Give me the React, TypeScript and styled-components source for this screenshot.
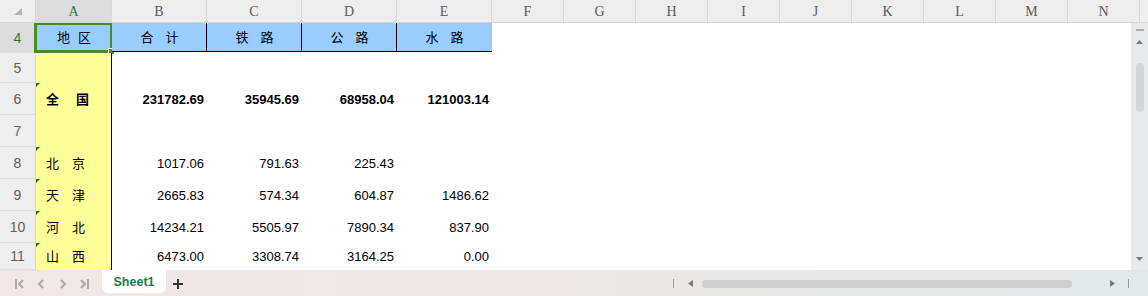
import React from "react";
import styled, { createGlobalStyle, css } from "styled-components";

const Global = createGlobalStyle`
  html, body { margin: 0; padding: 0; background: #fff; }
  body { width: 1148px; height: 296px; overflow: hidden; }
`;

const NUM_FONT = `"Liberation Sans", Arial, sans-serif`;
const CJK_FONT = `"Liberation Sans", "Noto Sans CJK SC", sans-serif`;

const Frame = styled.div`
  width: 1148px;
  height: 296px;
  display: flex;
  flex-direction: column;
  overflow: hidden;
  background: #fff;
`;

/* ---------- column headers ---------- */
const HeaderRow = styled.div`
  display: flex;
  flex: none;
  height: 23px;
  background: #eeeeee;
`;

const Corner = styled.div`
  width: 36px;
  flex: none;
  box-sizing: border-box;
  border-right: 1px solid #d6d6d6;
  border-bottom: 1px solid #d6d6d6;
  display: flex;
  align-items: flex-end;
  justify-content: flex-end;
  padding: 0 13px 7px 0;
`;

const ColHead = styled.div<{ $w: number; $active?: boolean }>`
  width: ${(p) => p.$w}px;
  flex: none;
  box-sizing: border-box;
  border-right: 1px solid #d9d9d9;
  border-bottom: 1px solid #d6d6d6;
  display: flex;
  align-items: center;
  justify-content: center;
  font-family: "Liberation Serif", "DejaVu Serif", serif;
  font-size: 14px;
  color: ${(p) => (p.$active ? "#1f7a45" : "#5a5a5a")};
  background: ${(p) => (p.$active ? "#dcdcdc" : "#eeeeee")};
  padding-top: 1px;
`;

const HeaderFill = styled.div`
  flex: 1;
  border-bottom: 1px solid #d6d6d6;
`;

/* ---------- body ---------- */
const Body = styled.div`
  flex: 1;
  display: flex;
  min-height: 0;
`;

const Sheet = styled.div`
  flex: 1;
  display: flex;
  flex-direction: column;
  overflow: hidden;
  background: #fff;
`;

const Row = styled.div<{ $h?: number }>`
  display: flex;
  flex: ${(p) => (p.$h ? `0 0 ${p.$h}px` : "1 1 auto")};
  height: ${(p) => (p.$h ? `${p.$h}px` : "auto")};
`;

const RowHead = styled.div<{ $active?: boolean }>`
  width: 36px;
  flex: none;
  box-sizing: border-box;
  border-right: 1px solid #d6d6d6;
  border-bottom: 1px solid #dcdcdc;
  background: ${(p) => (p.$active ? "#dcdcdc" : "#eeeeee")};
  color: ${(p) => (p.$active ? "#1f7a45" : "#606060")};
  font-family: ${NUM_FONT};
  font-size: 14px;
  display: flex;
  align-items: center;
  justify-content: center;
`;

type CellKind = "head" | "label" | "num" | "empty";

const Cell = styled.div<{
  $w: number;
  $kind: CellKind;
  $bold?: boolean;
  $edge?: boolean;
}>`
  position: relative;
  width: ${(p) => p.$w}px;
  flex: none;
  box-sizing: border-box;
  display: flex;
  align-items: center;
  font-size: 13px;
  color: #000;
  font-weight: ${(p) => (p.$bold ? 700 : 400)};
  ${(p) =>
    p.$kind === "head" &&
    css`
      background: #99ccff;
      background-clip: padding-box;
      border-bottom: 1px solid transparent;
      box-shadow: inset 0 -1px 0 #000 ${p.$edge ? ", inset -1px 0 0 #000" : ""};
      justify-content: center;
      font-family: ${CJK_FONT};
    `}
  ${(p) =>
    p.$kind === "label" &&
    css`
      background: #ffff99;
      border-right: 1px solid #000;
      padding-left: 10px;
      font-family: ${CJK_FONT};
    `}
  ${(p) =>
    p.$kind === "num" &&
    css`
      justify-content: flex-end;
      padding-right: 3px;
      font-family: ${NUM_FONT};
    `}
`;

const Chars = styled.span<{ $gap: number }>`
  display: inline-flex;
  gap: ${(p) => p.$gap}px;
  line-height: 1;
`;

const ErrorMark = styled.span`
  position: absolute;
  left: 0;
  top: 0;
  width: 0;
  height: 0;
  border-top: 4px solid #1a7a1a;
  border-right: 4px solid transparent;
`;

const Selection = styled.div`
  position: absolute;
  left: -2px;
  top: -1px;
  width: 79px;
  height: 31px;
  box-sizing: border-box;
  border: 3px solid #4a8c28;
  pointer-events: none;
`;

const FillHandle = styled.span`
  position: absolute;
  right: -5px;
  bottom: -5px;
  width: 5px;
  height: 5px;
  background: #4a8c28;
  border: 1px solid #fff;
`;

/* ---------- vertical scrollbar ---------- */
const VScroll = styled.div`
  width: 17px;
  flex: none;
  background: #e6eaea;
  display: flex;
  flex-direction: column;
  align-items: center;
  padding: 6px 0 9px;
  box-sizing: border-box;
`;

const Dash = styled.span`
  width: 8px;
  height: 2px;
  background: #a9adad;
  margin-left: 1px;
`;

const Thumb = styled.span<{ $vertical?: boolean }>`
  display: block;
  background: #d2d6d6;
  border-radius: 4px;
  ${(p) =>
    p.$vertical
      ? css`
          width: 8px;
          height: 49px;
          margin: 19px 0 0 1px;
        `
      : css`
          width: 370px;
          height: 8px;
          background: #cfcfcf;
        `}
`;

const Grow = styled.span`
  flex: 1;
`;

/* ---------- bottom bar ---------- */
const BottomBar = styled.div`
  flex: 0 0 26px;
  height: 26px;
  display: flex;
  align-items: stretch;
  background: linear-gradient(90deg, #f1e7e7 0%, #ebe8e6 50%, #e1e9e9 100%);
  border-top: 1px solid #e9e3e3;
  box-sizing: border-box;
`;

const NavGroup = styled.div`
  display: flex;
  align-items: center;
  padding-left: 15px;
  color: #a9a9a9;
`;

const NavBtn = styled.span<{ $gap: number }>`
  display: flex;
  margin-right: ${(p) => p.$gap}px;
`;

const Tab = styled.div`
  width: 64px;
  height: 23px;
  margin-top: -1px;
  background: #fff;
  border-radius: 0 0 6px 6px;
  display: flex;
  align-items: center;
  justify-content: center;
  font-family: ${NUM_FONT};
  font-weight: 700;
  font-size: 12.5px;
  color: #1b7a4c;
`;

const AddBtn = styled.span`
  display: flex;
  align-items: center;
  margin-left: 7px;
  color: #333;
`;

const HScroll = styled.div`
  margin-left: auto;
  padding-right: 19px;
  display: flex;
  align-items: center;
  color: #8c8c8c;
`;

const Tick = styled.span<{ $mr?: number }>`
  width: 1px;
  height: 9px;
  background: #9a9a9a;
  margin-right: ${(p) => p.$mr ?? 0}px;
`;

const Arrow = styled.span<{ $mr?: number }>`
  display: flex;
  margin-right: ${(p) => p.$mr ?? 0}px;
`;

/* ---------- data ---------- */
const colWidths: [string, number][] = [
  ["A", 76],
  ["B", 95],
  ["C", 95],
  ["D", 95],
  ["E", 95],
  ["F", 72],
  ["G", 72],
  ["H", 72],
  ["I", 72],
  ["J", 72],
  ["K", 72],
  ["L", 72],
  ["M", 72],
  ["N", 72],
];

const headers: { t: string; gap: number }[] = [
  { t: "地区", gap: 8 },
  { t: "合计", gap: 12 },
  { t: "铁路", gap: 12 },
  { t: "公路", gap: 12 },
  { t: "水路", gap: 12 },
];

type DataRow = {
  n: number;
  h?: number;
  label?: string;
  bold?: boolean;
  vals?: string[];
};

const rows: DataRow[] = [
  { n: 5, h: 30 },
  {
    n: 6,
    h: 32,
    label: "全国",
    bold: true,
    vals: ["231782.69", "35945.69", "68958.04", "121003.14"],
  },
  { n: 7, h: 32 },
  { n: 8, h: 32, label: "北京", vals: ["1017.06", "791.63", "225.43", ""] },
  { n: 9, h: 32, label: "天津", vals: ["2665.83", "574.34", "604.87", "1486.62"] },
  { n: 10, h: 32, label: "河北", vals: ["14234.21", "5505.97", "7890.34", "837.90"] },
  { n: 11, label: "山西", vals: ["6473.00", "3308.74", "3164.25", "0.00"] },
];

const Spaced = ({ text, gap }: { text: string; gap: number }) => (
  <Chars $gap={gap}>
    {text.split("").map((c, i) => (
      <span key={i}>{c}</span>
    ))}
  </Chars>
);

const Tri = ({ dir }: { dir: "up" | "down" | "left" | "right" }) => {
  const pts = {
    up: "0,4 7,4 3.5,0",
    down: "0,0 7,0 3.5,4",
    left: "5,0 5,7 0,3.5",
    right: "0,0 0,7 5,3.5",
  }[dir];
  const vertical = dir === "up" || dir === "down";
  return (
    <svg width={vertical ? 7 : 5} height={vertical ? 4 : 7} viewBox={vertical ? "0 0 7 4" : "0 0 5 7"}>
      <polygon points={pts} fill="#7a7a7a" />
    </svg>
  );
};

export default function App() {
  return (
    <Frame>
      <Global />
      <HeaderRow>
        <Corner>
          <svg width="8" height="7" viewBox="0 0 8 7">
            <polygon points="8,0 8,7 0,7" fill="#b4b4b4" />
          </svg>
        </Corner>
        {colWidths.map(([k, w]) => (
          <ColHead key={k} $w={w} $active={k === "A"}>
            {k}
          </ColHead>
        ))}
        <HeaderFill />
      </HeaderRow>

      <Body>
        <Sheet>
          <Row $h={30}>
            <RowHead $active>4</RowHead>
            {headers.map((h, i) => (
              <Cell key={h.t} $w={colWidths[i][1]} $kind="head" $edge={i >= 1 && i <= 3}>
                <Spaced text={h.t} gap={h.gap} />
                {i === 0 && (
                  <Selection>
                    <FillHandle />
                  </Selection>
                )}
              </Cell>
            ))}
          </Row>
          {rows.map((r) => (
            <Row key={r.n} $h={r.h}>
              <RowHead>{r.n}</RowHead>
              <Cell $w={76} $kind="label" $bold={r.bold}>
                {r.label && <ErrorMark />}
                {r.label && <Spaced text={r.label} gap={r.bold ? 17 : 13} />}
              </Cell>
              {[1, 2, 3, 4].map((ci) => (
                <Cell key={ci} $w={95} $kind="num" $bold={r.bold}>
                  {r.vals ? r.vals[ci - 1] : ""}
                </Cell>
              ))}
            </Row>
          ))}
        </Sheet>
        <VScroll>
          <Dash />
          <Arrow style={{ marginTop: 9 }}>
            <Tri dir="up" />
          </Arrow>
          <Thumb $vertical />
          <Grow />
          <Arrow>
            <Tri dir="down" />
          </Arrow>
        </VScroll>
      </Body>

      <BottomBar>
        <NavGroup>
          <NavBtn $gap={14}>
            <svg width="9" height="10" viewBox="0 0 9 10" fill="none" stroke="#a9a9a9" strokeWidth="2">
              <line x1="1" y1="0" x2="1" y2="10" />
              <polyline points="8,1 4,5 8,9" />
            </svg>
          </NavBtn>
          <NavBtn $gap={16}>
            <svg width="6" height="10" viewBox="0 0 6 10" fill="none" stroke="#a9a9a9" strokeWidth="2">
              <polyline points="5,1 1,5 5,9" />
            </svg>
          </NavBtn>
          <NavBtn $gap={14}>
            <svg width="6" height="10" viewBox="0 0 6 10" fill="none" stroke="#a9a9a9" strokeWidth="2">
              <polyline points="1,1 5,5 1,9" />
            </svg>
          </NavBtn>
          <NavBtn $gap={13}>
            <svg width="9" height="10" viewBox="0 0 9 10" fill="none" stroke="#a9a9a9" strokeWidth="2">
              <polyline points="1,1 5,5 1,9" />
              <line x1="8" y1="0" x2="8" y2="10" />
            </svg>
          </NavBtn>
        </NavGroup>
        <Tab>Sheet1</Tab>
        <AddBtn>
          <svg width="10" height="10" viewBox="0 0 10 10" stroke="#333" strokeWidth="2">
            <line x1="0" y1="5" x2="10" y2="5" />
            <line x1="5" y1="0" x2="5" y2="10" />
          </svg>
        </AddBtn>
        <HScroll>
          <Tick $mr={14} />
          <Arrow $mr={9}>
            <Tri dir="left" />
          </Arrow>
          <Thumb />
          <Arrow style={{ marginLeft: 38, marginRight: 13 }}>
            <Tri dir="right" />
          </Arrow>
          <Tick />
        </HScroll>
      </BottomBar>
    </Frame>
  );
}
